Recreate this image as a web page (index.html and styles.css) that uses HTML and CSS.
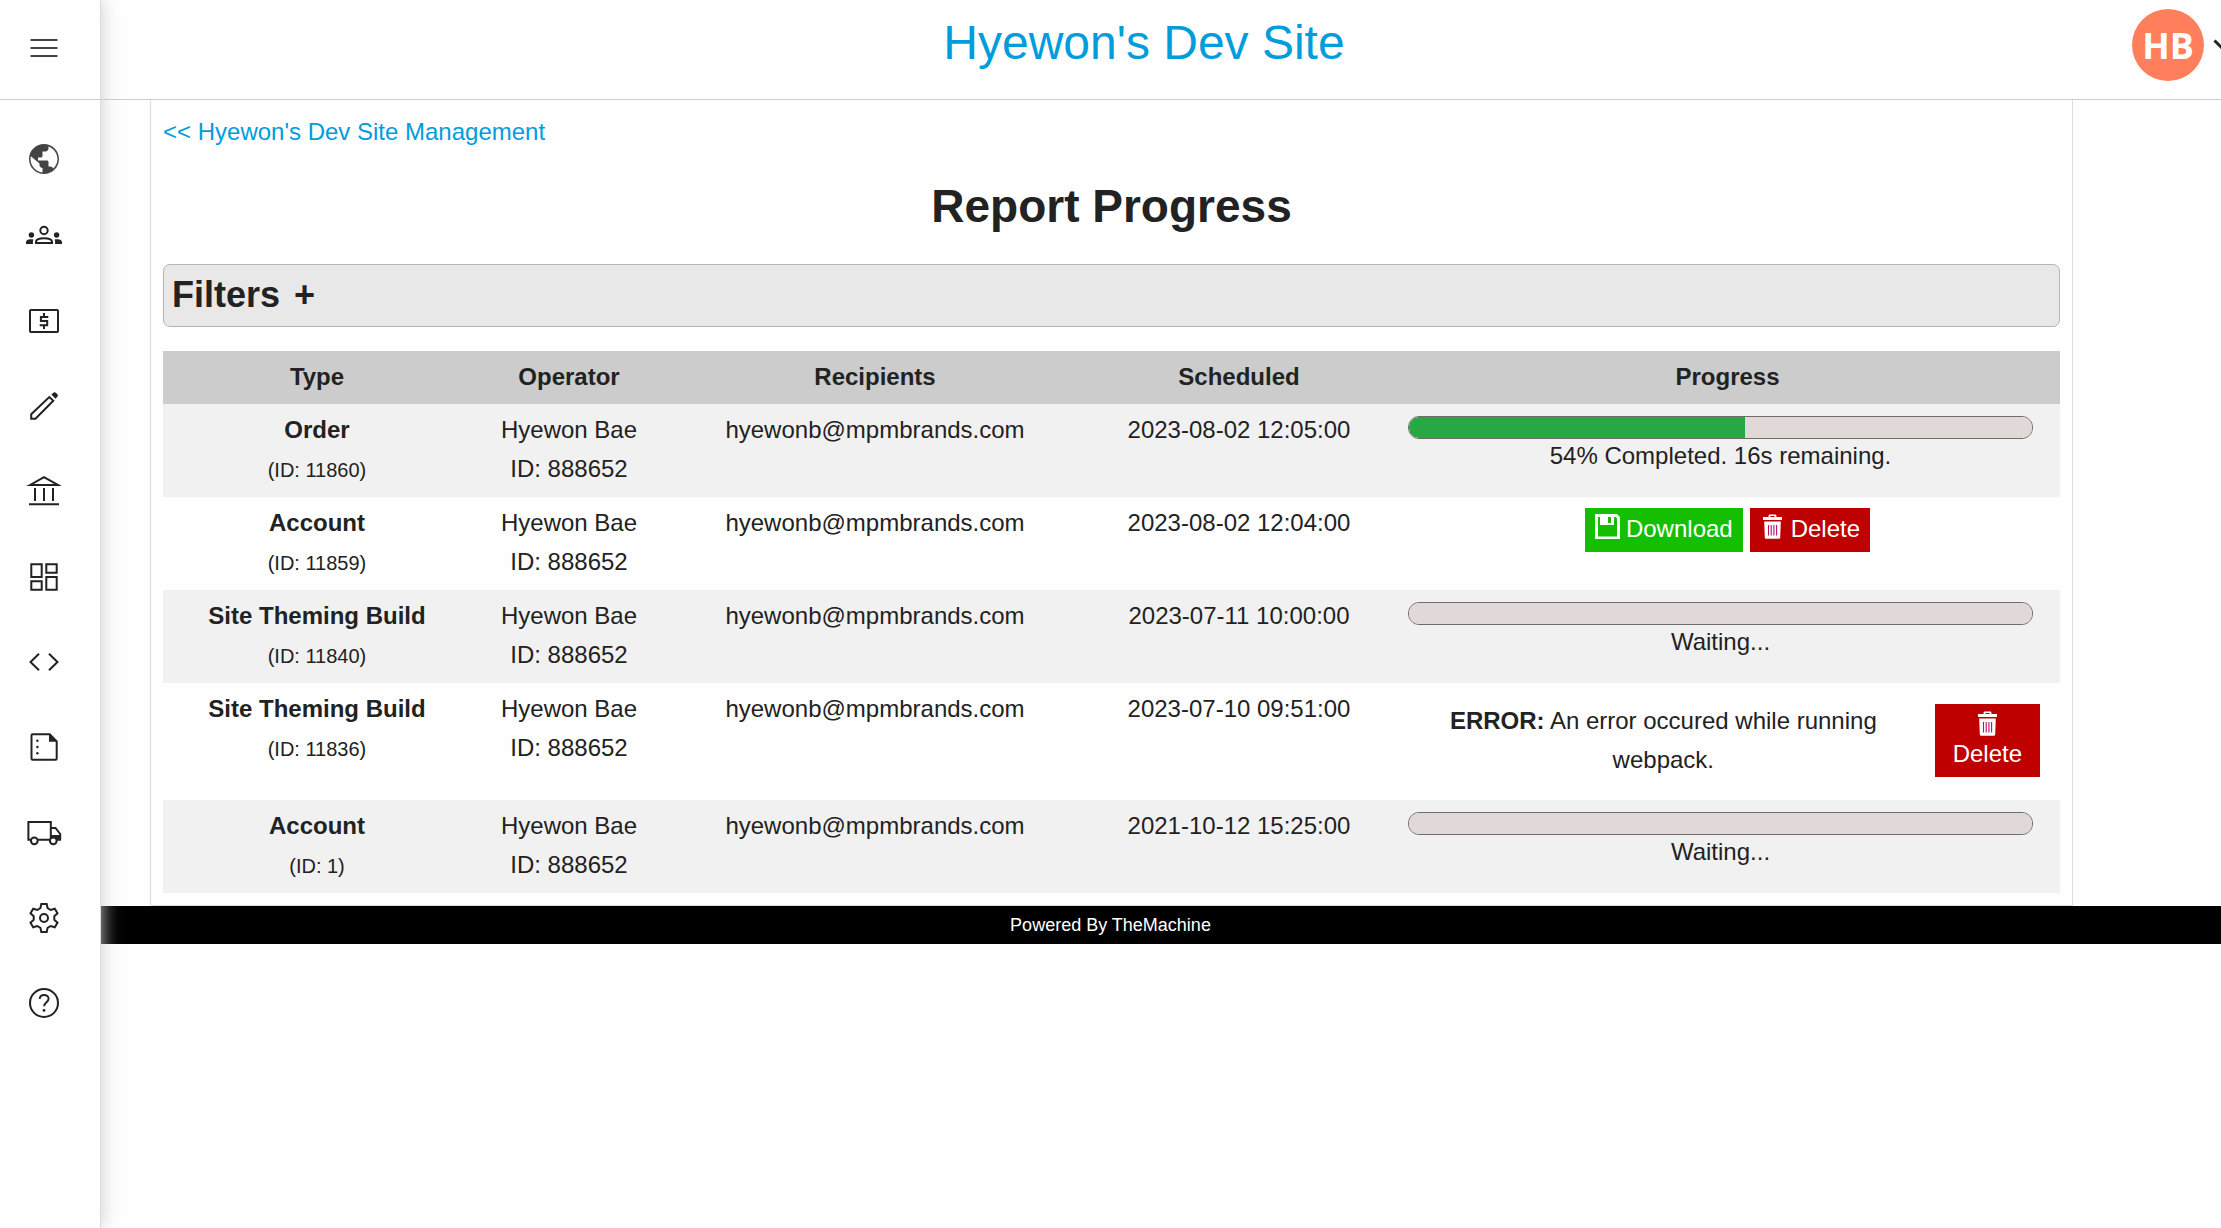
FILE: index.html
```html
<!DOCTYPE html>
<html lang="en">
<head>
<meta charset="utf-8">
<title>Report Progress</title>
<link rel="stylesheet" href="styles.css">
</head>
<body>
<svg class="sprite" aria-hidden="true">
  <symbol id="trash" viewBox="0 0 25 25">
    <path d="M8.600 3V1.600Q8.600.500 9.700.500h5.600q1.100 0 1.100 1.100V3h5.600v3H3V3zM10.400 3h4.200V2h-4.200z" fill="#fff"/>
    <path d="M4.200 7.500h16.600L20.200 23.400q0 1.400-1.400 1.400H6.200q-1.400 0-1.400-1.400z" fill="#fff"/>
    <path d="M8.500 11v10.500M11.200 11v10.500M13.900 11v10.500M16.600 11v10.500" stroke="#b8106c" stroke-width="1.100"/>
  </symbol>
  <symbol id="save" viewBox="0 0 25 25">
    <path d="M0 0h22l3 3v22H0zM3 3v19.500h19V4.500L20.500 3H19v8H5V3z" fill="#fff" fill-rule="evenodd"/>
    <path d="M5 3h14v8H5z" fill="#fff"/>
    <path d="M13 3h3v6h-3z" fill="#13bf00"/>
  </symbol>
</svg>

<aside class="sidebar">
  <button class="menu-toggle" type="button" aria-label="Menu">
    <svg class="icon soft" viewBox="0 0 36 36"><path class="line" d="M4.500 10h27M4.500 18h27M4.500 26h27"/></svg>
  </button>
  <nav class="nav" aria-label="Main">
    <a href="#sites" aria-label="Sites">
      <svg class="icon soft" viewBox="0 0 24 24"><path d="M12 2C6.480 2 2 6.480 2 12s4.480 10 10 10 10-4.480 10-10S17.520 2 12 2zm-1 18.930c-4.450-.490-8-4.350-8-8.930 0-.620.080-1.210.210-1.790L9 15v1c0 1.100.900 2 2 2v2.930zm7.200-2.540c-.260-.810-1.300-1.390-2.200-1.390h-1v-3c0-.550-.450-1-1-1H8v-2h2c.550 0 1-.450 1-1V7h2c1.100 0 2-.900 2-2v-1.410c3.330 1.190 6 4.560 6 8.410 0 2.480-1.100 4.770-2.800 6.390z"/></svg>
    </a>
    <ul class="nav-list">
      <li><a href="#people" aria-label="People">
        <svg class="icon" viewBox="0 0 36 36"><circle class="line" cx="18" cy="13.500" r="3.700"/><path class="line" d="M10 26v-1.200c0-2.200 3.300-3.600 8-3.600s8 1.400 8 3.600V26z"/><circle cx="5.400" cy="18" r="2.700"/><circle cx="30.600" cy="18" r="2.700"/><path d="M0 27v-1.800c0-1.900 2-2.900 4.500-2.900h1.700l1.200.200c-.300.800-.500 1.500-.500 2.300V27zM36 27v-1.800c0-1.900-2-2.900-4.500-2.900h-1.700l-1.200.200c.300.800.500 1.500.500 2.300V27z"/></svg></a></li>
      <li><a href="#payments" aria-label="Payments">
        <svg class="icon" viewBox="0 0 36 36"><rect class="line" x="4" y="7" width="28" height="22" rx="1"/><path class="line" d="M22.300 14H14.900V18h6.300v4.200h-7.500M18 10v4M18 22v4"/></svg></a></li>
      <li><a href="#edit" aria-label="Edit">
        <svg class="icon" viewBox="0 0 36 36"><path class="line" d="M5.200 30.800v-4.600L23.300 9l4 3.700L9.500 30.800z"/><path d="M25.400 6.600l2-1.900q1.200-1 2.500 0l1.500 1.500q1 1.200 0 2.500l-1.900 2z"/></svg></a></li>
      <li><a href="#accounts" aria-label="Accounts">
        <svg class="icon" viewBox="0 0 36 36"><path class="line" d="M4 12L18 4.200 32 12zM9 15v13M18 15v13M27 15v13M3 31.300h30"/></svg></a></li>
      <li><a href="#dashboard" aria-label="Dashboard">
        <svg class="icon" viewBox="0 0 36 36"><path class="line" d="M5.300 5.300h10.400v12.700H5.300zM20.300 5.300h10.400v8.400H20.300zM5.300 22.300h10.400v8.400H5.300zM20.300 18h10.400v12.700H20.300z"/></svg></a></li>
      <li><a href="#code" aria-label="Code">
        <svg class="icon" viewBox="0 0 36 36"><path class="line" d="M13 9.700L4.500 18l8.500 8.300M23 9.700l8.500 8.300-8.500 8.300"/></svg></a></li>
      <li><a href="#notes" aria-label="Notes">
        <svg class="icon" viewBox="0 0 36 36"><path class="line" d="M6.700 5.300h17l7 7v17.200q0 1.200-1.200 1.200H6.700q-1.200 0-1.200-1.200v-23q0-1.200 1.200-1.200z"/><path d="M23 4.700v8h8.200z"/><circle cx="11.400" cy="11.700" r="1.200"/><circle cx="11.400" cy="18" r="1.200"/><circle cx="11.400" cy="24.300" r="1.200"/></svg></a></li>
      <li><a href="#shipping" aria-label="Shipping">
        <svg class="icon" viewBox="0 0 36 36"><path class="line" d="M5 24.700H2.400V7h22.400v17.700H11.600M24.800 13h4.700l4.700 6v5.700M24.800 24.700H24"/><path d="M25 20h10v5.700h-4l-3.500-3.200-2.500.500z"/><circle class="line" cx="8.300" cy="25.800" r="3.400"/><circle class="line hole" cx="27.300" cy="25.800" r="3.400"/></svg></a></li>
      <li><a href="#settings" aria-label="Settings">
        <svg class="icon" viewBox="-18 -18 36 36"><path class="line" d="M-2.700-14H2.700L3.600-9.800 6.700-8l4.100-1.300 2.700 4.600-3.200 2.900v3.600l3.200 2.900-2.700 4.600L6.700 8 3.600 9.800 2.700 14h-5.400l-.900-4.200L-6.700 8l-4.100 1.300-2.700-4.600 3.200-2.900v-3.600l-3.200-2.900 2.700-4.600L-6.700-8l3.100-1.800z"/><circle class="line" r="4"/></svg></a></li>
      <li><a href="#help" aria-label="Help">
        <svg class="icon" viewBox="0 0 36 36"><circle class="line" cx="18" cy="18" r="14"/><path class="line" d="M13.600 13.800c.300-2.300 2-3.800 4.500-3.800s4.500 1.500 4.500 3.800c0 3.200-4.500 3.700-4.500 7.500"/><circle cx="18" cy="25.400" r="1.400"/></svg></a></li>
    </ul>
  </nav>
</aside>

<header class="topbar">
  <a class="site-name" href="#home">Hyewon's Dev Site</a>
  <button class="user" type="button" aria-label="User menu">
    <span class="avatar">HB</span>
    <svg class="chevron" viewBox="0 0 20 12" aria-hidden="true"><path d="M1.500 1.500L10 10l8.500-8.500"/></svg>
  </button>
</header>

<main class="page">
  <section class="panel">
    <a class="back" href="#management">&lt;&lt; Hyewon's Dev Site Management</a>
    <h1>Report Progress</h1>
    <button class="filters" type="button"><span>Filters</span><span>+</span></button>
    <table class="reports">
      <colgroup><col class="c-type"><col class="c-operator"><col class="c-recipients"><col class="c-scheduled"><col class="c-progress"></colgroup>
      <thead>
        <tr><th>Type</th><th>Operator</th><th>Recipients</th><th>Scheduled</th><th>Progress</th></tr>
      </thead>
      <tbody>
        <tr>
          <td><b>Order</b><br><small>(ID: 11860)</small></td>
          <td>Hyewon Bae<br>ID: 888652</td>
          <td>hyewonb@mpmbrands.com</td>
          <td>2023-08-02 12:05:00</td>
          <td><div class="status"><progress id="p1" max="100" value="54"></progress><label for="p1">54% Completed. 16s remaining.</label></div></td>
        </tr>
        <tr>
          <td><b>Account</b><br><small>(ID: 11859)</small></td>
          <td>Hyewon Bae<br>ID: 888652</td>
          <td>hyewonb@mpmbrands.com</td>
          <td>2023-08-02 12:04:00</td>
          <td><div class="actions">
            <button class="btn download" type="button"><svg><use href="#save"/></svg><span>Download</span></button>
            <button class="btn delete" type="button"><svg><use href="#trash"/></svg><span>Delete</span></button>
          </div></td>
        </tr>
        <tr>
          <td><b>Site Theming Build</b><br><small>(ID: 11840)</small></td>
          <td>Hyewon Bae<br>ID: 888652</td>
          <td>hyewonb@mpmbrands.com</td>
          <td>2023-07-11 10:00:00</td>
          <td><div class="status"><progress id="p3" max="100" value="0"></progress><label for="p3">Waiting...</label></div></td>
        </tr>
        <tr>
          <td><b>Site Theming Build</b><br><small>(ID: 11836)</small></td>
          <td>Hyewon Bae<br>ID: 888652</td>
          <td>hyewonb@mpmbrands.com</td>
          <td>2023-07-10 09:51:00</td>
          <td><div class="failure">
            <p><b>ERROR:</b> An error occured while running webpack.</p>
            <button class="btn delete stacked" type="button"><svg><use href="#trash"/></svg><span>Delete</span></button>
          </div></td>
        </tr>
        <tr>
          <td><b>Account</b><br><small>(ID: 1)</small></td>
          <td>Hyewon Bae<br>ID: 888652</td>
          <td>hyewonb@mpmbrands.com</td>
          <td>2021-10-12 15:25:00</td>
          <td><div class="status"><progress id="p5" max="100" value="0"></progress><label for="p5">Waiting...</label></div></td>
        </tr>
      </tbody>
    </table>
  </section>
</main>

<footer class="footer">Powered By TheMachine</footer>
</body>
</html>
```

FILE: styles.css
```css
* {
  box-sizing: border-box;
}

body {
  margin: 0;
  background: #fefefe;
  color: #222;
  font: 24px/39px "Liberation Sans", Arial, sans-serif;
  overflow-x: hidden;
}

button {
  border: 0;
  margin: 0;
  padding: 0;
  background: none;
  color: inherit;
  font: inherit;
  cursor: pointer;
}

a {
  color: #009cdc;
  text-decoration: none;
}

.sprite {
  display: none;
}

/* Sidebar */

.sidebar {
  position: fixed;
  top: 0;
  bottom: 0;
  left: 0;
  z-index: 2;
  width: 101px;
  border-right: 1px solid #ddd;
  background: #fefefe;
  box-shadow: 0 0 18px #ccc;
}

.menu-toggle {
  display: block;
  width: 100%;
  height: 100px;
  padding: 0 12px 4px 0;
  border-bottom: 1px solid #ccc;
}

.nav {
  display: flex;
  flex-direction: column;
  padding: 41px 12px 0 0;
}

.nav a {
  display: flex;
  justify-content: center;
}

.nav-list {
  margin: 40px 0 0;
  padding: 0;
  list-style: none;
}

.nav-list li {
  height: 85px;
}

.nav-list li:nth-child(3n + 1) {
  height: 86px;
}

.icon {
  width: 36px;
  height: 36px;
  fill: #222;
  stroke: #222;
  stroke-width: 0;
}

.icon.soft {
  fill: #444;
  stroke: #444;
}

.menu-toggle .icon {
  display: block;
  margin: 0 auto;
}

.icon .line {
  fill: none;
  stroke-width: 2;
}

.icon .hole {
  fill: #fefefe;
}

/* Top bar */

.topbar {
  display: flex;
  align-items: center;
  height: 100px;
  padding: 8px 0 18px 156px;
  border-bottom: 1px solid #ccc;
  overflow: hidden;
}

.site-name {
  flex: 1;
  padding-bottom: 3px;
  font-size: 48px;
  line-height: 56px;
  text-align: center;
}

.user {
  display: flex;
  flex: 0 0 89px;
  align-items: center;
  gap: 9px;
  min-width: 0;
}

.avatar {
  flex: none;
  width: 72px;
  height: 72px;
  border-radius: 50%;
  background: #ff7f5c;
  color: #fff;
  font: bold 36px/74px "Open Sans", sans-serif;
  text-align: center;
}

.chevron {
  flex: none;
  width: 20px;
  height: 12px;
  fill: none;
  stroke: #222;
  stroke-width: 3;
}

/* Content */

.page {
  padding: 0 148px 0 150px;
}

.panel {
  padding: 12px;
  border: 1px solid #ddd;
  border-top: 0;
}

.back {
  display: block;
}

h1 {
  margin: 23px 0 26px;
  font-size: 46px;
  line-height: 64px;
  text-align: center;
}

.filters {
  display: flex;
  gap: 14px;
  width: 100%;
  margin-bottom: 24px;
  padding: 6px 8px 8px;
  border: 1px solid #b5b5b5;
  border-radius: 7px;
  background: #e8e8e8;
  font-size: 36px;
  font-weight: bold;
  line-height: 47px;
}

.reports {
  width: 100%;
  border-collapse: collapse;
  table-layout: fixed;
  text-align: center;
}

.c-type { width: 308px; }
.c-operator { width: 196px; }
.c-recipients { width: 416px; }
.c-scheduled { width: 312px; }
.c-progress { width: 665px; }

.reports th {
  padding: 6px 0 8px;
  background: #ccc;
}

.reports td {
  padding: 6px 0 9px;
  vertical-align: top;
}

.reports tbody tr:nth-child(odd) {
  background: #f1f1f1;
}

.reports small {
  font-size: 20px;
  line-height: 20px;
}

.status {
  padding: 6px 27px 0 13px;
}

.status label {
  display: block;
  line-height: 34px;
}

progress {
  display: block;
  width: 100%;
  height: 23px;
  border: 1px solid #706c6c;
  border-radius: 11px;
  background: #e1d8d8;
  overflow: hidden;
  appearance: none;
}

progress::-webkit-progress-bar {
  background: #e1d8d8;
}

progress::-webkit-progress-value {
  background: #28a745;
}

.actions {
  display: flex;
  justify-content: center;
  gap: 7px;
  padding-top: 5px;
}

.btn {
  display: flex;
  gap: 6px;
  padding: 6px 10px 8px;
  color: #fff;
  line-height: 30px;
}

.btn svg {
  width: 25px;
  height: 25px;
}

.download {
  background: #13bf00;
}

.delete {
  background: #be0000;
}

.stacked {
  flex-direction: column;
  align-items: center;
  gap: 3px;
  padding: 7px 18px 8px;
}

.failure {
  display: flex;
  align-items: center;
  padding: 12px 20px 12px 0;
}

.failure p {
  flex: 1;
  margin: 0;
  padding: 0 16px 0 13px;
}

.footer {
  background: #000;
  color: #fff;
  font-size: 18px;
  line-height: 38px;
  text-align: center;
}
```
